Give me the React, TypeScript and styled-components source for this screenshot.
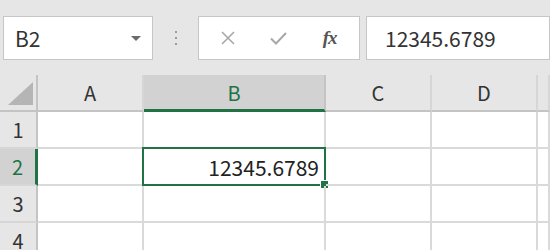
import React from "react";
import styled, { createGlobalStyle } from "styled-components";

const Global = createGlobalStyle`
  html, body { margin: 0; padding: 0; background: #e6e6e6; overflow: hidden; }
  body { width: 550px; height: 250px; font-family: "Noto Sans CJK JP", "Noto Sans", sans-serif; }
`;

const Page = styled.div`
  width: 550px;
  height: 250px;
  display: flex;
  flex-direction: column;
  background: #e6e6e6;
  overflow: hidden;
`;

const Toolbar = styled.div`
  height: 75px;
  flex: none;
  display: flex;
  align-items: flex-start;
  padding: 16px 0 0 3px;
  box-sizing: border-box;
`;

const Box = styled.div<{ $w?: number }>`
  height: 44px;
  box-sizing: border-box;
  background: #fff;
  border: 1px solid #c6c6c6;
  display: flex;
  align-items: center;
  flex: ${(p) => (p.$w ? `0 0 ${p.$w}px` : "1 1 auto")};
`;

const NameText = styled.span`
  flex: 1;
  padding-left: 11px;
  font-size: 21px;
  color: #333;
`;

const Caret = styled.span`
  width: 0;
  height: 0;
  border-left: 5px solid transparent;
  border-right: 5px solid transparent;
  border-top: 5px solid #6b6b6b;
  margin-right: 11px;
`;

const Dots = styled.div`
  width: 45px;
  height: 44px;
  flex: none;
  display: flex;
  flex-direction: column;
  align-items: center;
  justify-content: center;
  gap: 4px;
`;

const Dot = styled.span`
  width: 2px;
  height: 2px;
  background: #9a9a9a;
`;

const FormulaButtons = styled(Box)`
  justify-content: space-around;
  padding: 0 4px 0 4px;
  margin-right: 6px;
`;

const IconSlot = styled.span`
  width: 30px;
  display: flex;
  justify-content: center;
  align-items: center;
`;

const Fx = styled.span`
  font-family: "Liberation Serif", serif;
  font-style: italic;
  font-weight: bold;
  font-size: 19px;
  color: #555;
  letter-spacing: -1px;
`;

const FormulaText = styled.span`
  padding-left: 18px;
  font-size: 21px;
  color: #333;
`;

const Grid = styled.div`
  flex: 1;
  display: grid;
  grid-template-columns: 38px 106px 182px 106px 106px 1fr;
  grid-template-rows: 37px repeat(4, 37px);
  background: #fff;
`;

const ColHead = styled.div<{ $sel?: boolean }>`
  box-sizing: border-box;
  background: ${(p) => (p.$sel ? "#d2d2d2" : "#e6e6e6")};
  border-right: 2px solid ${(p) => (p.$sel ? "#c4c4c4" : "#d6d6d6")};
  border-bottom: ${(p) => (p.$sel ? "3px solid #217346" : "2px solid #c4c4c4")};
  display: flex;
  align-items: center;
  justify-content: center;
  font-size: 20px;
  color: ${(p) => (p.$sel ? "#217346" : "#333")};
`;

const Corner = styled.div`
  box-sizing: border-box;
  background: #e6e6e6;
  border-right: 2px solid #c4c4c4;
  border-bottom: 2px solid #c4c4c4;
  display: flex;
  align-items: flex-end;
  justify-content: flex-end;
  padding: 0 3px 5px 0;
`;

const RowHead = styled.div<{ $sel?: boolean }>`
  box-sizing: border-box;
  background: ${(p) => (p.$sel ? "#d2d2d2" : "#e6e6e6")};
  border-right: ${(p) => (p.$sel ? "3px solid #217346" : "2px solid #c4c4c4")};
  border-bottom: 2px solid #d6d6d6;
  display: flex;
  align-items: center;
  justify-content: center;
  font-size: 20px;
  color: ${(p) => (p.$sel ? "#217346" : "#333")};
`;

const Cell = styled.div`
  box-sizing: border-box;
  position: relative;
  border-right: 2px solid #dadada;
  border-bottom: 2px solid #dadada;
  display: flex;
  align-items: center;
  justify-content: flex-end;
  padding-right: 5px;
  font-size: 21px;
  color: #222;
`;

const Selection = styled.div`
  position: absolute;
  left: -2px;
  top: -2px;
  right: -2px;
  bottom: -2px;
  border: 2px solid #217346;
  pointer-events: none;
`;

const Handle = styled.div`
  position: absolute;
  right: -5px;
  bottom: -5px;
  width: 7px;
  height: 7px;
  background: #217346;
  border: 1px solid #fff;
`;

const cols = ["A", "B", "C", "D", ""];

export default function App() {
  return (
    <Page>
      <Global />
      <Toolbar>
        <Box $w={150}>
          <NameText>B2</NameText>
          <Caret />
        </Box>
        <Dots>
          <Dot />
          <Dot />
          <Dot />
        </Dots>
        <FormulaButtons $w={162}>
          <IconSlot>
            <svg width="14" height="14" viewBox="0 0 14 14">
              <path d="M1 1L13 13M13 1L1 13" stroke="#a8a8a8" strokeWidth="1.6" fill="none" />
            </svg>
          </IconSlot>
          <IconSlot>
            <svg width="17" height="13" viewBox="0 0 17 13">
              <path d="M1 6.5L6 11.5L16 1" stroke="#a8a8a8" strokeWidth="2" fill="none" />
            </svg>
          </IconSlot>
          <IconSlot>
            <Fx>fx</Fx>
          </IconSlot>
        </FormulaButtons>
        <Box>
          <FormulaText>12345.6789</FormulaText>
        </Box>
      </Toolbar>
      <Grid>
        <Corner>
          <svg width="25" height="23" viewBox="0 0 25 23">
            <polygon points="25,0 25,23 0,23" fill="#b5b5b5" />
          </svg>
        </Corner>
        {cols.map((c, i) => (
          <ColHead key={i} $sel={c === "B"}>
            {c}
          </ColHead>
        ))}
        {[1, 2, 3, 4].map((r) => (
          <React.Fragment key={r}>
            <RowHead $sel={r === 2}>{r}</RowHead>
            {cols.map((c, i) => (
              <Cell key={i}>
                {r === 2 && c === "B" && (
                  <>
                    12345.6789
                    <Selection>
                      <Handle />
                    </Selection>
                  </>
                )}
              </Cell>
            ))}
          </React.Fragment>
        ))}
      </Grid>
    </Page>
  );
}
